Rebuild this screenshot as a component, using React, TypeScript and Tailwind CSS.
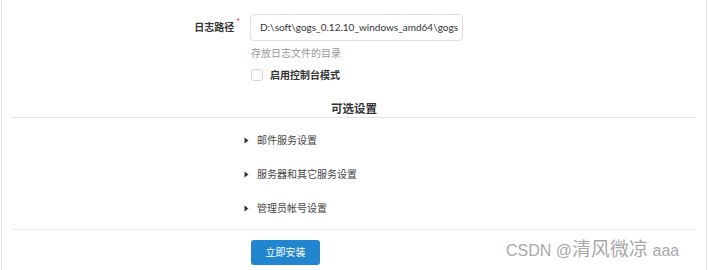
import React from 'react'

const FONT = { fontFamily: 'Lato, "Noto Sans CJK SC", "Noto Sans", sans-serif' }

const SECTIONS = ['邮件服务设置', '服务器和其它服务设置', '管理员帐号设置']

function Caret() {
  return (
    <svg width="5" height="7" viewBox="0 0 5 7" className="shrink-0">
      <path d="M0.5 0.5 L4.5 3.5 L0.5 6.5 Z" fill="#333" />
    </svg>
  )
}

export default function App() {
  return (
    <div className="w-[709px] h-[270px] bg-white overflow-hidden text-[#333]" style={FONT}>
      <div className="ml-[1px] w-[706px] h-full border-x border-[#e6e6e6] flex flex-col">
        {/* log path field */}
        <div className="flex items-center mt-[14px] h-[27px]">
          <div className="w-[248px] flex justify-end pr-[10px]">
            <span className="text-[10px] font-bold text-[#333]">日志路径</span>
            <span className="text-[9px] text-[#db2828] ml-[2px] -mt-[5px]">*</span>
          </div>
          <div className="w-[213px] h-[27px] border border-[#dedede] rounded-[4px] flex items-center pl-[9px] overflow-hidden whitespace-nowrap">
            <span className="text-[10px] text-[#333]">D:\soft\gogs_0.12.10_windows_amd64\gogs</span>
          </div>
        </div>
        <div className="ml-[249px] mt-[5px] h-[14px] text-[10px] text-[#999] leading-[14px]">存放日志文件的目录</div>
        <div className="ml-[249px] mt-[8px] h-[14px] flex items-center gap-[7px]">
          <div className="w-[12px] h-[12px] border border-[#d4d4d5] rounded-[3px] bg-white" />
          <span className="text-[10px] font-bold leading-[14px]">启用控制台模式</span>
        </div>

        {/* optional settings */}
        <div className="mt-[20px] h-[14px] text-center text-[11.5px] font-bold leading-[14px]">可选设置</div>
        <div className="mx-[10px] mt-[1px] border-t border-[#e3e3e3]" />

        <div className="flex flex-col ml-[242px] mt-[15px] gap-[20px]">
          {SECTIONS.map((s) => (
            <div key={s} className="flex items-center gap-[8px] h-[14px]">
              <Caret />
              <span className="text-[10px] text-[#444] leading-[14px]">{s}</span>
            </div>
          ))}
        </div>

        <div className="mx-[10px] mt-[14px] border-t border-[#eeeeee]" />

        <div className="relative flex mt-[10px]">
          <button className="ml-[249px] w-[69px] h-[25px] rounded-[3px] bg-[#2185d0] text-white text-[10px] flex items-center justify-center">
            立即安装
          </button>
          <span className="absolute left-[504px] top-[0px] text-[16px] leading-[20px] text-[#a8a8a8] whitespace-nowrap" style={{ fontFamily: '"Liberation Sans", "Noto Sans CJK SC", sans-serif' }}>
            CSDN @<span className="text-[19px]">清风微凉</span> aaa
          </span>
        </div>
      </div>
    </div>
  )
}
